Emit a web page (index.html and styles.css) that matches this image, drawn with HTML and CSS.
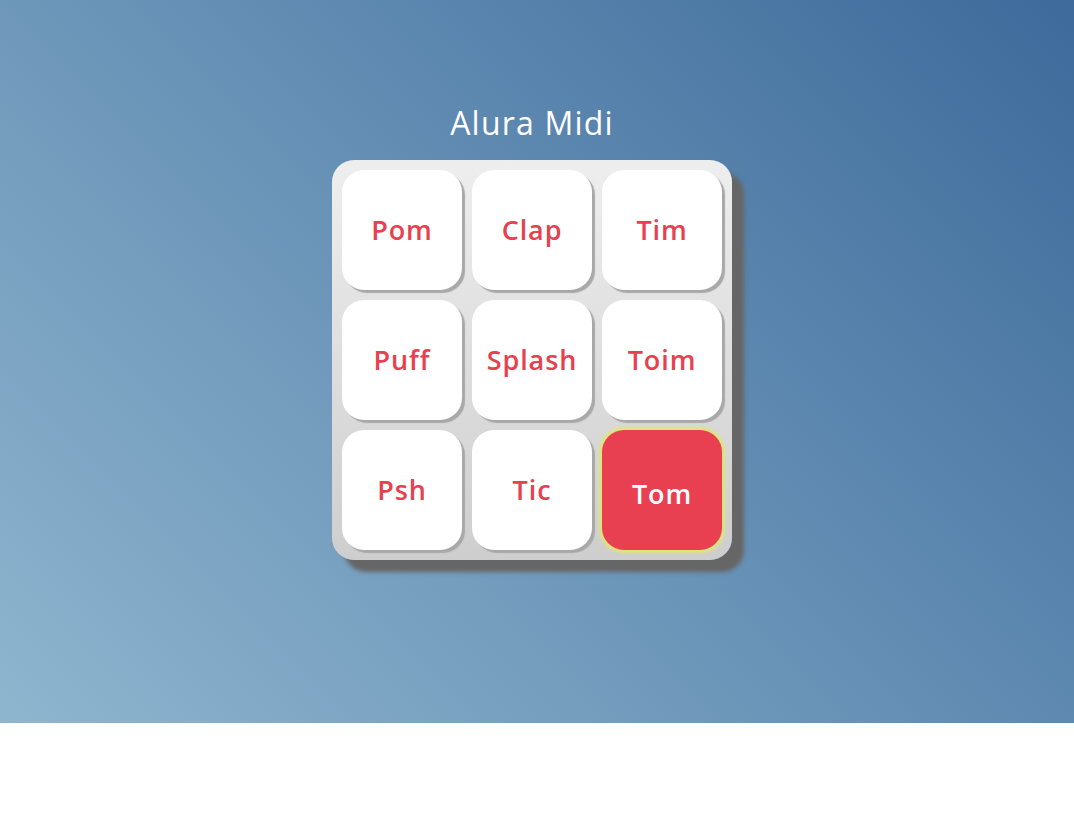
FILE: index.html
```html
<!DOCTYPE html>
<html lang="pt-br">
<head>
<meta charset="utf-8">
<title>Alura Midi</title>
<link rel="stylesheet" href="styles.css">
</head>
<body>
<main class="stage">
  <h1 class="title">Alura Midi</h1>
  <section class="keypad">
    <button class="key">Pom</button>
    <button class="key">Clap</button>
    <button class="key">Tim</button>
    <button class="key">Puff</button>
    <button class="key">Splash</button>
    <button class="key">Toim</button>
    <button class="key">Psh</button>
    <button class="key">Tic</button>
    <button class="key key-active">Tom</button>
  </section>
</main>
</body>
</html>
```

FILE: styles.css
```css
html, body {
  margin: 0;
  padding: 0;
  background: #fff;
}

.stage {
  height: 723px;
  box-sizing: border-box;
  padding: 101px 10px 0 0;
  display: flex;
  flex-direction: column;
  align-items: center;
  background: linear-gradient(45deg, #8fb6cf 0%, #3d6a9b 100%);
  font-family: "Open Sans", "Liberation Sans", sans-serif;
}

.title {
  margin: 0 0 16px 0;
  height: 43px;
  line-height: 43px;
  color: #fff;
  font-size: 32px;
  font-weight: 400;
  letter-spacing: 1.2px;
}

.keypad {
  display: grid;
  grid-template-columns: repeat(3, 120px);
  grid-auto-rows: 120px;
  gap: 10px;
  padding: 10px;
  width: 400px;
  height: 400px;
  box-sizing: border-box;
  border-radius: 22px;
  background: linear-gradient(to bottom, #eeeeee, #cecece);
  box-shadow: 12px 12px 4px #666666;
}

.key {
  width: 120px;
  height: 120px;
  border: 0;
  border-radius: 22px;
  background: #fff;
  color: #e8404f;
  font-family: "Open Sans", "Liberation Sans", sans-serif;
  font-size: 27px;
  font-weight: 600;
  letter-spacing: 0.9px;
  padding: 0 0 2px 0;
  box-shadow: 3px 3px 1px #a8a8a8;
  cursor: pointer;
}

.key-active {
  background: #e83f51;
  color: #fff;
  font-weight: 600;
  padding: 6px 0 0 0;
  box-shadow: 0 0 3px 3px #dfe57a;
}
```
